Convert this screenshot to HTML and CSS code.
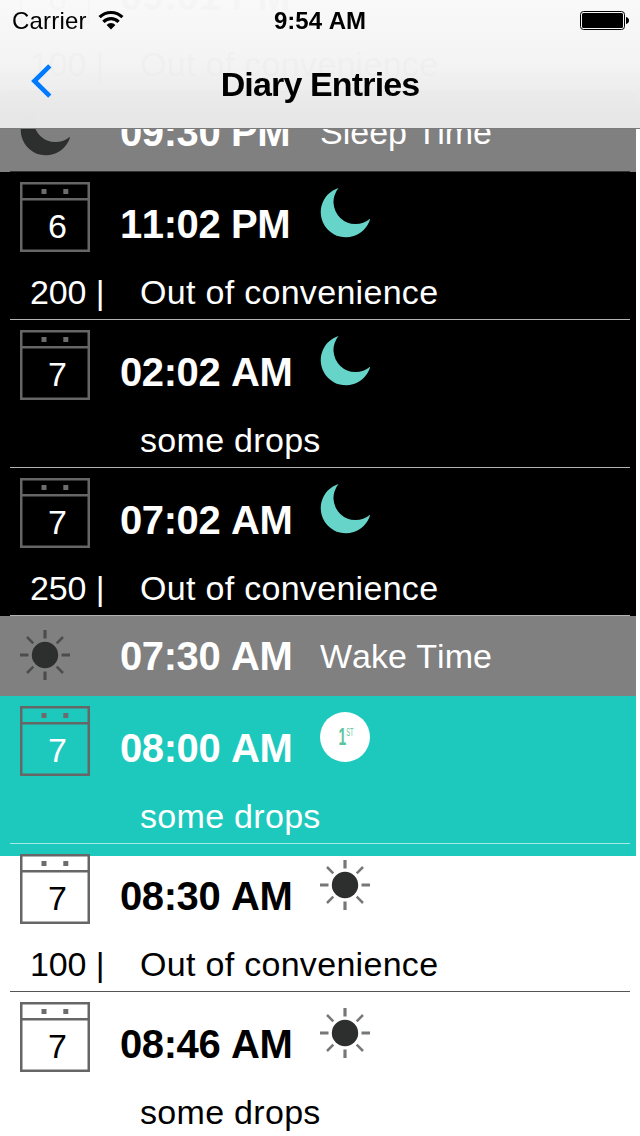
FILE: index.html
```
<!DOCTYPE html>
<html lang="en">
<head>
    <meta charset="UTF-8">
    <meta name="viewport" content="width=device-width, initial-scale=1.0">
    <title>Diary Entries</title>
    <link rel="stylesheet" href="styles.css">
</head>
<body>
    <!-- Shared icons -->
    <svg class="icon-defs" width="0" height="0">
        <symbol id="moon" viewBox="0 0 50 50">
            <path d="M18.5 0 A25.2 25.2 0 1 0 50.3 30.5 A22.1 22.1 0 0 1 18.5 0 Z" fill="currentColor"/>
        </symbol>
        <symbol id="sun" viewBox="0 0 50 50">
            <circle cx="25" cy="25" r="13.2" fill="#2d2f2e"/>
            <g stroke="currentColor" stroke-width="3.2">
                <path d="M25 0V8.5M25 41.5V50M0 25H8.5M41.5 25H50"/>
                <path d="M7 7L13.3 13.3M36.7 36.7L43 43M43 7L36.7 13.3M13.3 36.7L7 43" stroke-width="2.5"/>
            </g>
        </symbol>
        <symbol id="calendar" viewBox="0 0 70 70">
            <rect x="1.25" y="1.25" width="67.5" height="67.5" fill="none" stroke="#666" stroke-width="2.5"/>
            <path d="M2 17.3H68" stroke="#666" stroke-width="2.6"/>
            <path d="M21.5 7h5v5h-5zM43.3 7h5v5h-5z" fill="#6c6c6c"/>
        </symbol>
    </svg>

    <header class="navbar">
        <div class="status-bar">
            <div class="carrier">
                <span>Carrier</span>
                <svg class="wifi" width="26" height="20" viewBox="0 0 26 20">
                    <g fill="none" stroke="#000" stroke-width="3.2">
                        <path d="M1.6 7.2A16.2 16.2 0 0 1 24.4 7.2"/>
                        <path d="M5.4 11.8A10.7 10.7 0 0 1 20.6 11.8"/>
                    </g>
                    <path d="M13 19.4L8.6 15A6 6 0 0 1 17.4 15Z"/>
                </svg>
            </div>
            <div class="clock">9:54 AM</div>
            <div class="battery">
                <svg width="50" height="19" viewBox="0 0 50 19">
                    <rect x="0.5" y="0.5" width="44" height="18" rx="3" fill="none" stroke="#000"/>
                    <rect x="2" y="2" width="41" height="15" rx="1.5"/>
                    <path d="M46 6C50 6.5 50 12.5 46 13Z"/>
                </svg>
            </div>
        </div>
        <div class="title-bar">
            <svg class="back" width="22" height="36" viewBox="0 0 22 36">
                <path d="M18.8 1.8L3.4 17L18.8 32.2" fill="none" stroke="#007aff" stroke-width="4.6"/>
            </svg>
            <h1>Diary Entries</h1>
        </div>
    </header>

    <main class="diary">
        <section class="entry day">
            <div class="entry-top">
                <div class="date"><svg><use href="#calendar"/></svg><span>6</span></div>
                <div class="time">09:01 PM</div>
            </div>
            <div class="entry-info"><span class="amount">100 |</span><span>Out of convenience</span></div>
        </section>

        <section class="marker sleep">
            <svg class="icon moon"><use href="#moon"/></svg>
            <div class="time">09:30 PM</div>
            <div class="label">Sleep Time</div>
        </section>

        <section class="entry night">
            <div class="entry-top">
                <div class="date"><svg><use href="#calendar"/></svg><span>6</span></div>
                <div class="time">11:02 PM</div>
                <svg class="icon"><use href="#moon"/></svg>
            </div>
            <div class="entry-info"><span class="amount">200 |</span><span>Out of convenience</span></div>
        </section>

        <section class="entry night">
            <div class="entry-top">
                <div class="date"><svg><use href="#calendar"/></svg><span>7</span></div>
                <div class="time">02:02 AM</div>
                <svg class="icon"><use href="#moon"/></svg>
            </div>
            <div class="entry-info"><span class="amount"></span><span>some drops</span></div>
        </section>

        <section class="entry night">
            <div class="entry-top">
                <div class="date"><svg><use href="#calendar"/></svg><span>7</span></div>
                <div class="time">07:02 AM</div>
                <svg class="icon"><use href="#moon"/></svg>
            </div>
            <div class="entry-info"><span class="amount">250 |</span><span>Out of convenience</span></div>
        </section>

        <section class="marker">
            <svg class="icon"><use href="#sun"/></svg>
            <div class="time">07:30 AM</div>
            <div class="label">Wake Time</div>
        </section>

        <section class="entry first">
            <div class="entry-top">
                <div class="date"><svg><use href="#calendar"/></svg><span>7</span></div>
                <div class="time">08:00 AM</div>
                <div class="badge"><span>1<sup>ST</sup></span></div>
            </div>
            <div class="entry-info"><span class="amount"></span><span>some drops</span></div>
        </section>

        <section class="entry day">
            <div class="entry-top">
                <div class="date"><svg><use href="#calendar"/></svg><span>7</span></div>
                <div class="time">08:30 AM</div>
                <svg class="icon"><use href="#sun"/></svg>
            </div>
            <div class="entry-info"><span class="amount">100 |</span><span>Out of convenience</span></div>
        </section>

        <section class="entry day">
            <div class="entry-top">
                <div class="date"><svg><use href="#calendar"/></svg><span>7</span></div>
                <div class="time">08:46 AM</div>
                <svg class="icon"><use href="#sun"/></svg>
            </div>
            <div class="entry-info"><span class="amount"></span><span>some drops</span></div>
        </section>
    </main>
</body>
</html>
```
FILE: styles.css
```
* {
    box-sizing: border-box;
}

body {
    margin: 0;
    height: 1136px;
    overflow: hidden;
    background-color: #fff;
    font-family: "Liberation Sans", Arial, sans-serif;
    font-kerning: none;
    color: #000;
}

svg {
    display: block;
}

.icon-defs {
    position: absolute;
}

.navbar {
    position: fixed;
    top: 0;
    left: 0;
    z-index: 1;
    width: 100%;
    height: 129px;
    background: linear-gradient(rgba(249, 249, 249, 0.985), rgba(243, 243, 243, 0.985) 50%, rgba(231, 231, 231, 0.995) 90%);
    border-bottom: 1px solid #7b7b7b;
}

.status-bar {
    display: grid;
    grid-template-columns: 1fr auto 1fr;
    height: 40px;
    padding: 0 12px;
    font-size: 24px;
    line-height: 41px;
}

.carrier {
    display: flex;
    letter-spacing: 0.2px;
}

.wifi {
    margin: 10px 0 0 11px;
}

.clock {
    font-weight: bold;
}

.battery {
    display: flex;
    justify-content: flex-end;
    padding-top: 11px;
    margin-right: -2px;
}

.title-bar {
    display: grid;
    grid-template-columns: 60px 1fr 60px;
    height: 88px;
}

.back {
    margin: 24px 0 0 31px;
}

.title-bar h1 {
    margin: 0;
    text-align: center;
    font-size: 34px;
    line-height: 88px;
    letter-spacing: -0.85px;
}

.diary {
    width: 636px;
    margin-top: -56px;
}

.entry {
    height: 148px;
}

.entry::after,
.sleep::after {
    content: "";
    display: block;
    height: 1px;
    margin: 0 6px 0 10px;
    background-color: #b2b2b2;
}

.entry-top {
    display: flex;
    align-items: flex-start;
    height: 100px;
    padding-left: 20px;
}

.date {
    display: grid;
    width: 70px;
    height: 70px;
    margin-top: 10px;
    font-size: 34px;
    line-height: 40px;
    text-align: center;
}

.date svg,
.date span {
    grid-area: 1 / 1;
}

.date svg {
    width: 70px;
    height: 70px;
}

.date span {
    padding: 24px 0 0 5px;
}

.time {
    width: 200px;
    margin-top: 32px;
    margin-left: 30px;
    font-size: 40px;
    font-weight: bold;
    line-height: 40px;
    letter-spacing: -0.4px;
    white-space: nowrap;
}

.icon,
.badge {
    width: 50px;
    height: 50px;
    margin-top: 16px;
    color: #777;
}

.entry-info {
    display: flex;
    height: 47px;
    padding-left: 30px;
    font-size: 34px;
    line-height: 40px;
    letter-spacing: 0.3px;
}

.amount {
    width: 110px;
    letter-spacing: -0.1px;
}

.day {
    color: #000;
}

.day::after {
    background-color: #555;
}

.night {
    background-color: #000;
    color: #fff;
}

.night .icon {
    color: #66d4c8;
}

/* Background runs a little under the next entry */
.first {
    height: 160px;
    margin-bottom: -12px;
    background-color: #1dc8bd;
    color: #fff;
}

.first::after {
    background-color: #a4e9e5;
}

.badge {
    display: flex;
    justify-content: center;
    border-radius: 50%;
    background-color: #fff;
    color: #5cc4a0;
}

.badge span {
    display: flex;
    font-size: 24px;
    font-weight: bold;
    line-height: 50px;
    transform: translateX(1px) scaleX(0.58);
}

.badge sup {
    font-size: 10px;
    font-weight: normal;
    line-height: 42px;
}

.marker {
    display: flex;
    flex-wrap: wrap;
    align-content: flex-start;
    height: 80px;
    padding-left: 20px;
    background-color: #808080;
    color: #fff;
}

.marker .icon {
    margin-top: 14px;
    color: #4c4c4c;
}

.marker .moon {
    color: #2d2f2e;
}

.marker .time {
    margin-top: 20px;
    margin-left: 50px;
}

.marker .label {
    margin-top: 20px;
    font-size: 34px;
    line-height: 40px;
}

.sleep::after {
    width: 620px;
    margin: 15px 0 0 -10px;
    background-color: #333;
}
```
